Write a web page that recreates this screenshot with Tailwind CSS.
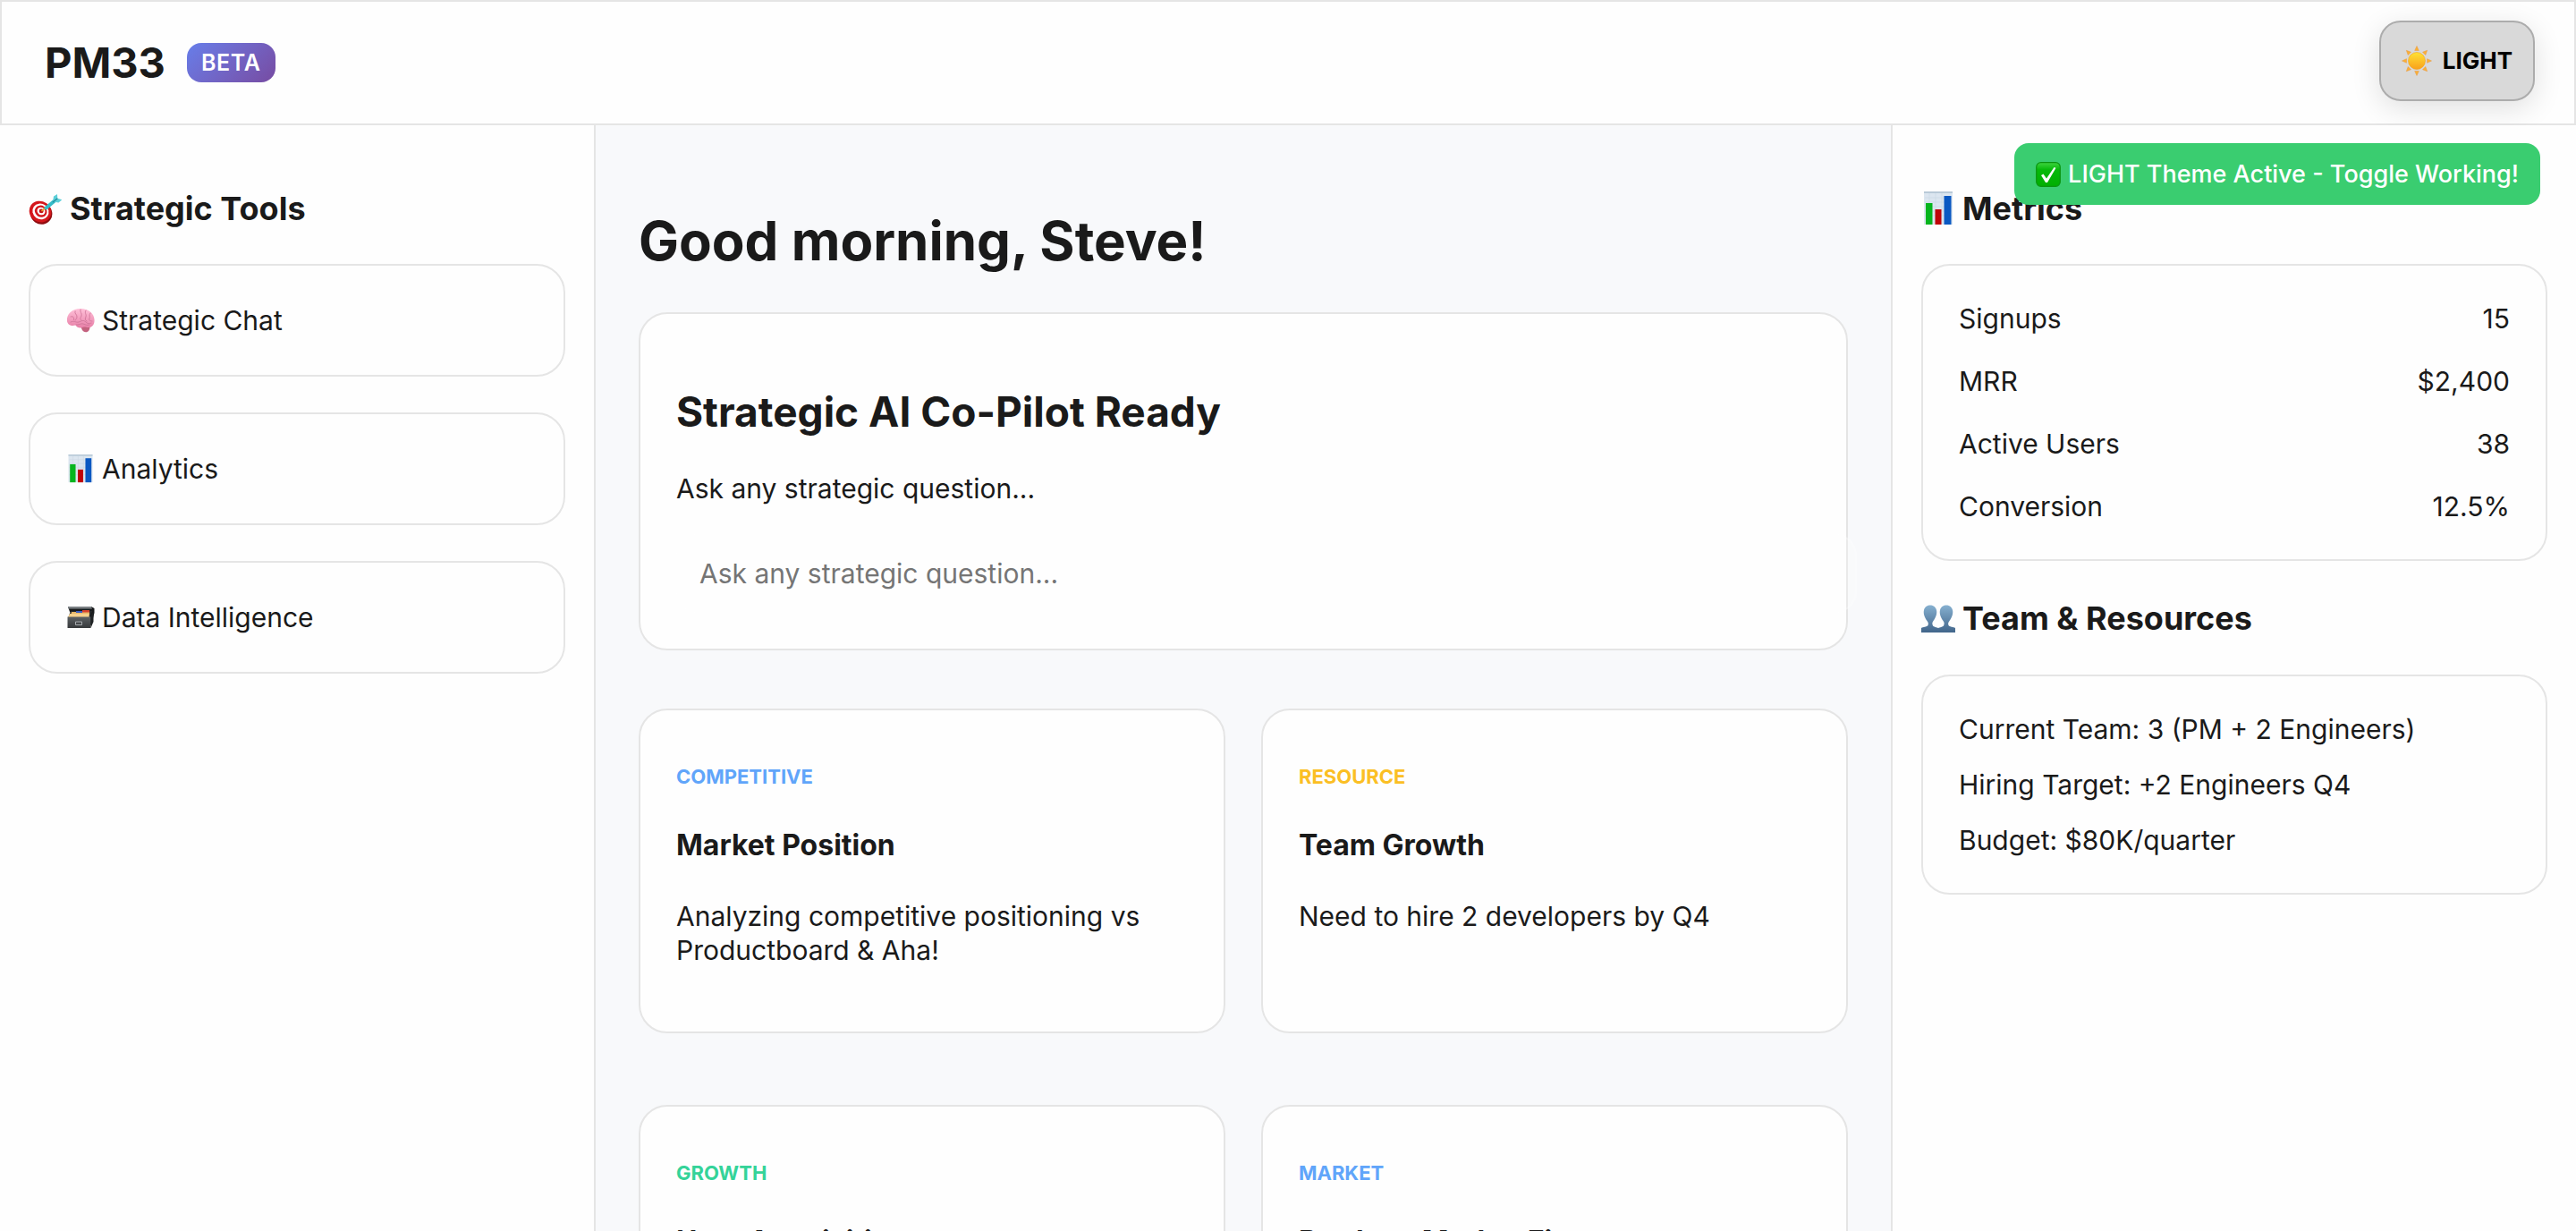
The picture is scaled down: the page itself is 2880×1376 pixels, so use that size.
<!DOCTYPE html>
<html lang="en">
<head>
<meta charset="utf-8">
<meta name="viewport" content="width=device-width, initial-scale=1">
<title>PM33</title>
<script src="https://cdn.jsdelivr.net/npm/@tailwindcss/browser@4"></script>
</head>
<body class="relative flex h-screen flex-col overflow-hidden bg-[#f8f9fb] font-[Inter,sans-serif] text-[30px] leading-[38px] text-[#1a1a1a]">

<!-- Icon sprite -->
<svg class="absolute size-0" aria-hidden="true">
  <defs>
    <linearGradient id="g-sun" x1="0" y1="0" x2="0" y2="1"><stop offset="0" stop-color="#ffe234"/><stop offset="1" stop-color="#f9a01b"/></linearGradient>
    <linearGradient id="g-people" x1="0" y1="0" x2="0" y2="1"><stop offset="0" stop-color="#86b0d0"/><stop offset="1" stop-color="#41658a"/></linearGradient>
    <linearGradient id="g-check" x1="0" y1="0" x2="0" y2="1"><stop offset="0" stop-color="#3fd33f"/><stop offset=".3" stop-color="#06b90a"/><stop offset="1" stop-color="#00ae00"/></linearGradient>
    <linearGradient id="g-brain" x1="0" y1="0" x2="0" y2="1"><stop offset="0" stop-color="#ffc0d8"/><stop offset="1" stop-color="#e880a8"/></linearGradient>
    <linearGradient id="g-box" x1="0" y1="0" x2="0" y2="1"><stop offset="0" stop-color="#5c6063"/><stop offset="1" stop-color="#36393b"/></linearGradient>
  </defs>
  <symbol id="target" viewBox="0 0 38 38">
    <ellipse cx="14.5" cy="24.5" rx="12.4" ry="12" fill="#8f0d10" transform="rotate(35 14 24)"/>
    <ellipse cx="13" cy="22.6" rx="12.6" ry="11.6" fill="#d4161b" transform="rotate(35 13 22.6)"/>
    <ellipse cx="13.4" cy="22.4" rx="9.3" ry="8.6" fill="#fff" transform="rotate(35 13.4 22.4)"/>
    <ellipse cx="13.7" cy="22.2" rx="7" ry="6.4" fill="#d4161b" transform="rotate(35 13.7 22.2)"/>
    <ellipse cx="14" cy="22" rx="4.6" ry="4.2" fill="#fff" transform="rotate(35 14 22)"/>
    <ellipse cx="14.2" cy="21.9" rx="2.5" ry="2.3" fill="#c01015"/>
    <path d="M14.5 21.8 22 16" stroke="#e8a82c" stroke-width="1.6"/>
    <path d="M19.5 18.5 29 10.5" stroke="#36bcc8" stroke-width="4" stroke-linecap="round"/>
    <path d="M27 11.5 28 5.5 32 3 32.3 7.8 37.3 9.3 33.5 12.6Z" fill="#5ccfd8"/>
    <path d="M27 12 32.3 7.8" stroke="#1c8b99" stroke-width="1.2"/>
  </symbol>
  <symbol id="brain" viewBox="0 0 32 32">
    <path d="M16 22c1 3 2 7 6 7.300 3 0 4.500-3 4.500-5.800Z" fill="#c4627f"/>
    <path d="M1 17C0 9 7 3 16 3c9 0 15 5 15.500 12 .5 5-2 8.500-5.500 9-3 .5-4-1-6.500-.5C17 25 12 25 10.500 21.500 6 23 1.500 21 1 17Z" fill="url(#g-brain)"/>
    <path d="M5 12c3-1 4 1 3.500 3.500M10 6c-1 3 2 3 2 6s-2 3-2 4M16 4c-1 3 2 4 1 7s-2 3 0 5M22 5c-2 3 1 4 0 7s-1 4 1 5M27 8c-2 2 0 4-1 6s1 3 3 3M5 18c4-2 6 1 9 0s5-3 8 0 5 1 6 1M11 21c3 1 5-2 8-1s4 2 7 1" fill="none" stroke="#cf769a" stroke-width=".9" stroke-linecap="round"/>
  </symbol>
  <symbol id="chart" viewBox="0 0 38 38">
    <path d="M3 0h32v37H3z" fill="#dce6f0"/>
    <path d="M3 0h32v2H3z" fill="#b9cad8"/>
    <path d="M4 7h30M4 12h30M4 17h30M4 22h30M4 27h30M9 2v34M16 2v34M23 2v34" stroke="#cbd8e4" stroke-width=".6"/>
    <path d="M5 13h7.500v24H5z" fill="#06b51e"/>
    <path d="M15.500 20h7v17h-7z" fill="#c00409"/>
    <path d="M25.500 5h8v32h-8z" fill="#0a58c2"/>
  </symbol>
  <symbol id="box" viewBox="0 0 32 32">
    <path d="M2 4h26l3.500 2v5L28 25 4 10Z" fill="#17191b"/>
    <path d="M2 4h26l1 2.500H2.500Z" fill="#7b8084"/>
    <path d="M5 9h24l-3 8H2Z" fill="#26292b"/>
    <path d="M6 10h20v4H5Z" fill="#e9b96a"/>
    <path d="M11 9h7v2h-7Z" fill="#3d5fc4"/>
    <path d="M18 8h8v2.500h-8Z" fill="#d8422f"/>
    <path d="M4 12h21l1 4H2Z" fill="#f6d08c"/>
    <path d="M1.500 15.500h26V28h-26Z" fill="url(#g-box)"/>
    <path d="M27.500 15.500 30.500 9v12l-3 7Z" fill="#1f2224"/>
    <path d="M10.500 21h7v3.500h-7Z" fill="none" stroke="#a6aaad" stroke-width="1"/>
  </symbol>
  <symbol id="people" viewBox="0 0 38 38">
    <path d="M0 35v-5c2-1.500 6-1 7.500-3 .8-2 .2-3.500-1-5C4 18.500 2 14 3 10c1-4 4-5.500 7-5.500S16 6 17 10c1 4-1 8.500-3.500 12-1.200 1.500-1.500 3-.7 5 1 2 4.700 2 6.200 3v5Z" fill="url(#g-people)"/>
    <path d="M38 35v-5c-2-1.500-6-1-7.500-3-.8-2-.2-3.500 1-5 2.500-3.500 4.500-8 3.500-12-1-4-4-5.500-7-5.500S22 6 21 10c-1 4 1 8.500 3.500 12 1.200 1.500 1.500 3 .7 5-1 2-4.700 2-6.200 3v5Z" fill="url(#g-people)"/>
  </symbol>
  <symbol id="sun" viewBox="0 0 34 34">
    <g fill="#fbb034" stroke="#e79a4a" stroke-width=".5">
      <path id="ray" d="M17 .5 19.300 5.500h-4.600Z"/>
      <use href="#ray" transform="rotate(45 17 17)"/><use href="#ray" transform="rotate(90 17 17)"/><use href="#ray" transform="rotate(135 17 17)"/><use href="#ray" transform="rotate(180 17 17)"/><use href="#ray" transform="rotate(225 17 17)"/><use href="#ray" transform="rotate(270 17 17)"/><use href="#ray" transform="rotate(315 17 17)"/>
    </g>
    <circle cx="17" cy="17" r="9.500" fill="url(#g-sun)" stroke="#f2a51d" stroke-width=".6"/>
  </symbol>
  <symbol id="check" viewBox="0 0 28 28">
    <rect x=".7" y=".7" width="26.600" height="26.600" rx="5" fill="url(#g-check)" stroke="#0a9410" stroke-width="1.200"/>
    <path d="m6 15 2.500-1.500 3.500 5L20.500 6l2 .8L13 23h-2Z" fill="#fff"/>
  </symbol>
</svg>

<header class="flex h-[140px] shrink-0 items-center justify-between border-2 border-[#e5e5e5] bg-[#fefefe] pr-11 pl-12">
  <div class="flex items-center gap-6">
    <span class="text-[47px] leading-[56px] font-bold">PM33</span>
    <span class="flex h-11 items-center rounded-2xl bg-linear-135 from-[#667eea] to-[#764ba2] px-4 text-[25px] leading-7 font-semibold tracking-wide text-white">BETA</span>
  </div>
  <button type="button" class="mb-1 flex h-[90px] items-center gap-3 rounded-3xl border-2 border-[#acacac] bg-[#d9d9d9] px-[23px] text-[26px] leading-8 font-bold text-black shadow-[0_8px_32px_rgba(0,0,0,0.12)]">
    <svg class="size-[34px]" aria-hidden="true"><use href="#sun"/></svg>LIGHT
  </button>
</header>

<div role="status" class="absolute top-40 right-10 z-10 flex h-[69px] items-center gap-2 rounded-2xl bg-[#3acd70] px-6 text-[27px] leading-8 font-medium text-white">
  <svg class="size-7" aria-hidden="true"><use href="#check"/></svg>LIGHT Theme Active - Toggle Working!
</div>

<div class="flex min-h-0 flex-1">
  <aside class="w-[666px] shrink-0 border-r-2 border-[#e5e5e5] bg-[#fefefe] px-8 pt-[71px]">
    <h3 class="mb-10 flex items-center gap-2 text-[36px] leading-[44px] font-bold"><svg class="size-[38px]" aria-hidden="true"><use href="#target"/></svg>Strategic Tools</h3>
    <nav class="flex flex-col gap-10">
      <button type="button" class="flex h-[126px] items-center gap-2 rounded-[32px] border-2 border-[#e5e5e5] px-10 text-left"><svg class="size-8" aria-hidden="true"><use href="#brain"/></svg>Strategic Chat</button>
      <button type="button" class="flex h-[126px] items-center gap-2 rounded-[32px] border-2 border-[#e5e5e5] px-10 text-left"><svg class="size-8" aria-hidden="true"><use href="#chart"/></svg>Analytics</button>
      <button type="button" class="flex h-[126px] items-center gap-2 rounded-[32px] border-2 border-[#e5e5e5] px-10 text-left"><svg class="size-8" aria-hidden="true"><use href="#box"/></svg>Data Intelligence</button>
    </nav>
  </aside>

  <main class="min-w-0 flex-1 overflow-hidden px-12 pt-[91px]">
    <h1 class="mb-[42px] text-[60px] leading-[76px] font-bold">Good morning, Steve!</h1>

    <section class="rounded-[32px] border-2 border-[#e5e5e5] bg-[#fefefe] p-10">
      <h2 class="mt-[42px] text-[46px] leading-[54px] font-bold">Strategic AI Co-Pilot Ready</h2>
      <p class="mt-10">Ask any strategic question...</p>
      <input type="text" aria-label="Ask any strategic question" placeholder="Ask any strategic question..." class="mt-8 block h-[88px] w-[calc(100%+52px)] rounded-3xl border-2 border-white/20 bg-white/20 px-6 placeholder:text-[#757575]">
    </section>

    <div class="mt-[65px] grid grid-cols-2 gap-x-10 gap-y-20">
      <article class="rounded-[32px] border-2 border-[#e5e5e5] bg-[#fefefe] px-10 pt-[60px] pb-[72px]">
        <p class="text-[22px] leading-7 font-bold text-[#60a5fa]">COMPETITIVE</p>
        <h4 class="mt-11 text-[32px] font-bold">Market Position</h4>
        <p class="mt-[41px]">Analyzing competitive positioning vs Productboard &amp; Aha!</p>
      </article>
      <article class="rounded-[32px] border-2 border-[#e5e5e5] bg-[#fefefe] px-10 pt-[60px] pb-[72px]">
        <p class="text-[22px] leading-7 font-bold text-[#fbbf24]">RESOURCE</p>
        <h4 class="mt-11 text-[32px] font-bold">Team Growth</h4>
        <p class="mt-[41px]">Need to hire 2 developers by Q4</p>
      </article>
      <article class="rounded-[32px] border-2 border-[#e5e5e5] bg-[#fefefe] px-10 pt-[60px] pb-[72px]">
        <p class="text-[22px] leading-7 font-bold text-[#34d399]">GROWTH</p>
        <h4 class="mt-11 text-[32px] font-bold">User Acquisition</h4>
      </article>
      <article class="rounded-[32px] border-2 border-[#e5e5e5] bg-[#fefefe] px-10 pt-[60px] pb-[72px]">
        <p class="text-[22px] leading-7 font-bold text-[#60a5fa]">MARKET</p>
        <h4 class="mt-11 text-[32px] font-bold">Product-Market Fit</h4>
      </article>
    </div>
  </main>

  <aside class="w-[766px] shrink-0 border-l-2 border-[#e5e5e5] bg-[#fefefe] px-8 pt-[71px]">
    <h3 class="mb-10 flex items-center gap-2 text-[36px] leading-[44px] font-bold"><svg class="size-[38px]" aria-hidden="true"><use href="#chart"/></svg>Metrics</h3>
    <dl class="flex flex-col gap-8 rounded-[32px] border-2 border-[#e5e5e5] p-10">
      <div class="flex justify-between"><dt>Signups</dt><dd>15</dd></div>
      <div class="flex justify-between"><dt>MRR</dt><dd>$2,400</dd></div>
      <div class="flex justify-between"><dt>Active Users</dt><dd>38</dd></div>
      <div class="flex justify-between"><dt>Conversion</dt><dd>12.5%</dd></div>
    </dl>
    <h3 class="mt-[42px] mb-[41px] flex items-center gap-2 text-[36px] leading-[44px] font-bold"><svg class="size-[38px]" aria-hidden="true"><use href="#people"/></svg>Team &amp; Resources</h3>
    <div class="flex flex-col gap-6 rounded-[32px] border-2 border-[#e5e5e5] p-10">
      <p>Current Team: 3 (PM + 2 Engineers)</p>
      <p>Hiring Target: +2 Engineers Q4</p>
      <p>Budget: $80K/quarter</p>
    </div>
  </aside>
</div>
</body>
</html>
